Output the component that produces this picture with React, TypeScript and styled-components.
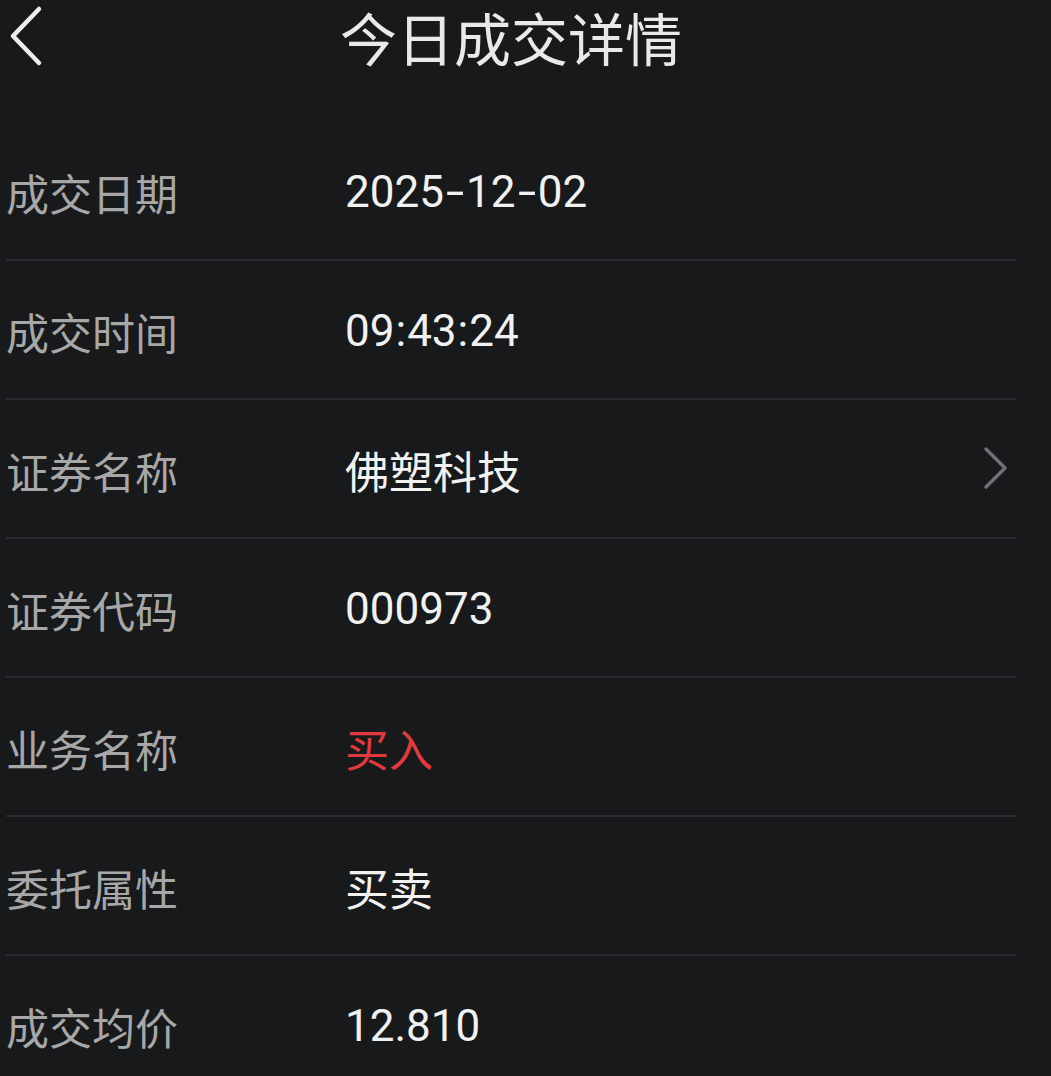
import React from "react";
import styled, { createGlobalStyle } from "styled-components";

const Global = createGlobalStyle`
  html, body { margin: 0; padding: 0; background: #18191b; }
  body { font-family: Roboto, "Noto Sans CJK SC", sans-serif; }
`;

const Page = styled.div`
  width: 1051px;
  min-height: 1076px;
  background: #18191b;
  box-sizing: border-box;
  padding: 0 35px 0 6px;
  overflow: hidden;
`;

const Header = styled.header`
  display: grid;
  grid-template-columns: 1fr auto 1fr;
  align-items: start;
  height: 76px;
`;

const BackButton = styled.button`
  justify-self: start;
  display: flex;
  align-items: center;
  background: none;
  border: 0;
  padding: 0 0 0 3px;
  margin-top: 5px;
  cursor: pointer;
`;

const Title = styled.h1`
  margin: 0;
  padding-top: 1px;
  font-family: "Noto Sans CJK SC", sans-serif;
  font-weight: 400;
  font-size: 57px;
  line-height: 70px;
  color: #e9e9ea;
`;

const List = styled.div`
  padding-top: 46px;
`;

const Row = styled.div`
  display: flex;
  align-items: center;
  height: 139px;
  box-sizing: border-box;
  border-bottom: 2px solid #2a2b2e;
  padding-top: 2px;
`;

const Label = styled.div`
  width: 339px;
  flex-shrink: 0;
  font-family: "Noto Sans CJK SC", sans-serif;
  font-size: 43px;
  color: #a7a7a8;
`;

const Value = styled.div<{ $tone?: "red" }>`
  flex: 1;
  font-family: Roboto, "Noto Sans CJK SC", sans-serif;
  font-size: 44px;
  color: ${(p) => (p.$tone === "red" ? "#e2393f" : "#f1f1f2")};
`;

const Sep = styled.span<{ $wide?: boolean }>`
  display: inline-block;
  margin: 0 ${(p) => (p.$wide ? "5px" : "1px")};
  transform: ${(p) => (p.$wide ? "scaleX(1.5)" : "none")};
`;

const Arrow = styled.div`
  display: flex;
  align-items: center;
  padding-right: 6px;
  margin-top: -4px;
`;

const rows: { label: string; value: string; tone?: "red"; link?: boolean }[] = [
  { label: "成交日期", value: "2025-12-02" },
  { label: "成交时间", value: "09:43:24" },
  { label: "证券名称", value: "佛塑科技", link: true },
  { label: "证券代码", value: "000973" },
  { label: "业务名称", value: "买入", tone: "red" },
  { label: "委托属性", value: "买卖" },
  { label: "成交均价", value: "12.810" },
];

function renderValue(v: string) {
  return v.split(/([-:])/).map((part, i) =>
    part === "-" || part === ":" ? (
      <Sep key={i} $wide={part === "-"}>
        {part}
      </Sep>
    ) : (
      <React.Fragment key={i}>{part}</React.Fragment>
    )
  );
}

export default function App() {
  return (
    <>
      <Global />
      <Page>
        <Header>
          <BackButton aria-label="返回">
            <svg width="36" height="62" viewBox="0 0 36 62" fill="none">
              <path d="M30 4 L4 31 L30 58" stroke="#ededee" strokeWidth="4.5" strokeLinecap="round" strokeLinejoin="round" />
            </svg>
          </BackButton>
          <Title>今日成交详情</Title>
          <span />
        </Header>
        <List>
          {rows.map((r) => (
            <Row key={r.label}>
              <Label>{r.label}</Label>
              <Value $tone={r.tone}>{renderValue(r.value)}</Value>
              {r.link && (
                <Arrow>
                  <svg width="28" height="44" viewBox="0 0 28 44" fill="none">
                    <path d="M4 3 L23 22 L4 41" stroke="#6d7079" strokeWidth="3.5" strokeLinecap="round" strokeLinejoin="round" />
                  </svg>
                </Arrow>
              )}
            </Row>
          ))}
        </List>
      </Page>
    </>
  );
}
